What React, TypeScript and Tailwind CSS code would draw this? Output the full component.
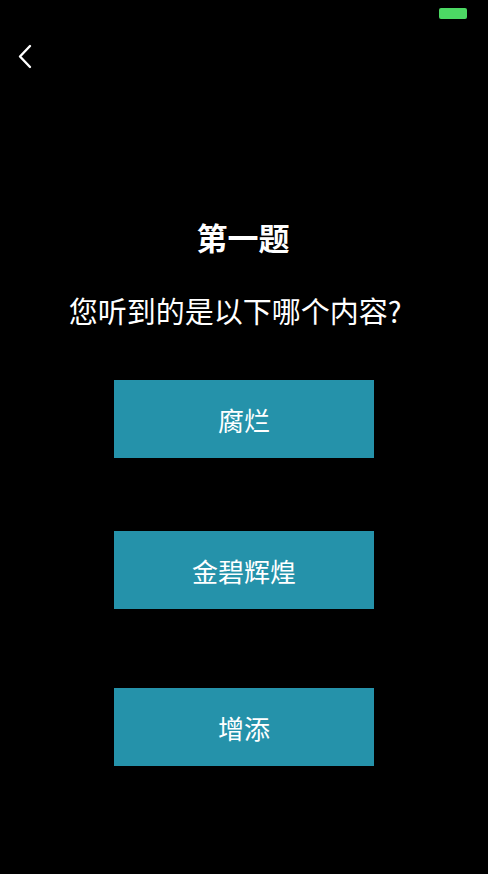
import React from "react";

const options = [
  { label: "腐烂", mt: "mt-[55px]" },
  { label: "金碧辉煌", mt: "mt-[73px]" },
  { label: "增添", mt: "mt-[79px]" },
];

export default function App() {
  return (
    <div
      className="min-h-[874px] w-full bg-black text-white flex flex-col"
      style={{ fontFamily: '"Noto Sans CJK SC", "Noto Sans", sans-serif' }}
    >
      <div className="h-[28px] flex justify-end items-start pt-[8px] pr-[21px]">
        <div className="w-[28px] h-[11px] rounded-[2px] bg-[#4cd964]" />
      </div>
      <div className="pl-[17px] mt-[16px] h-[25px] flex items-center">
        <svg width="16" height="25" viewBox="0 0 16 25" fill="none">
          <path
            d="M13 2 L3 12.5 L13 23"
            stroke="white"
            strokeWidth="2.4"
            strokeLinecap="round"
            strokeLinejoin="round"
          />
        </svg>
      </div>
      <div className="mt-[152px] text-center text-[31px] leading-none font-bold pr-[2px]">
        第一题
      </div>
      <div className="mt-[44px] text-center text-[29px] leading-none pr-[18px]">
        您听到的是以下哪个内容?
      </div>
      <div className="flex flex-col items-center">
        {options.map((o) => (
          <button
            key={o.label}
            className={`${o.mt} w-[260px] h-[78px] bg-[#2592aa] text-white text-[26px] flex items-center justify-center`}
          >
            {o.label}
          </button>
        ))}
      </div>
    </div>
  );
}
